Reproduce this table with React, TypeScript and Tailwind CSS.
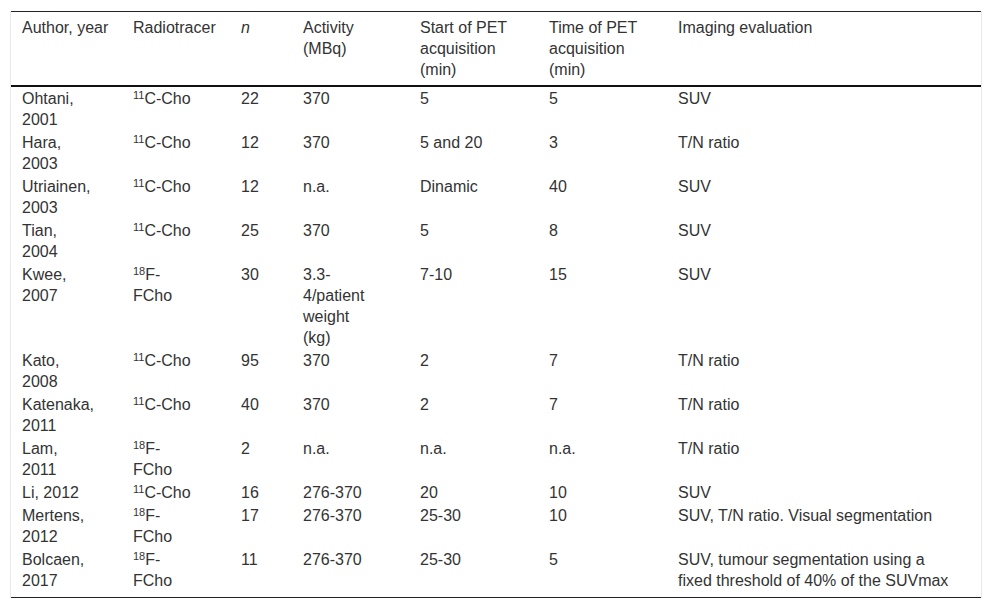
import React from 'react';

type Row = {
  author: string[];
  iso: string;
  tracer: string[];
  n: string;
  activity: string[];
  start: string;
  time: string;
  evaluation: string[];
};

const rows: Row[] = [
  { author: ['Ohtani,', '2001'], iso: '11', tracer: ['C-Cho'], n: '22', activity: ['370'], start: '5', time: '5', evaluation: ['SUV'] },
  { author: ['Hara,', '2003'], iso: '11', tracer: ['C-Cho'], n: '12', activity: ['370'], start: '5 and 20', time: '3', evaluation: ['T/N ratio'] },
  { author: ['Utriainen,', '2003'], iso: '11', tracer: ['C-Cho'], n: '12', activity: ['n.a.'], start: 'Dinamic', time: '40', evaluation: ['SUV'] },
  { author: ['Tian,', '2004'], iso: '11', tracer: ['C-Cho'], n: '25', activity: ['370'], start: '5', time: '8', evaluation: ['SUV'] },
  { author: ['Kwee,', '2007'], iso: '18', tracer: ['F-', 'FCho'], n: '30', activity: ['3.3-', '4/patient', 'weight', '(kg)'], start: '7-10', time: '15', evaluation: ['SUV'] },
  { author: ['Kato,', '2008'], iso: '11', tracer: ['C-Cho'], n: '95', activity: ['370'], start: '2', time: '7', evaluation: ['T/N ratio'] },
  { author: ['Katenaka,', '2011'], iso: '11', tracer: ['C-Cho'], n: '40', activity: ['370'], start: '2', time: '7', evaluation: ['T/N ratio'] },
  { author: ['Lam,', '2011'], iso: '18', tracer: ['F-', 'FCho'], n: '2', activity: ['n.a.'], start: 'n.a.', time: 'n.a.', evaluation: ['T/N ratio'] },
  { author: ['Li, 2012'], iso: '11', tracer: ['C-Cho'], n: '16', activity: ['276-370'], start: '20', time: '10', evaluation: ['SUV'] },
  { author: ['Mertens,', '2012'], iso: '18', tracer: ['F-', 'FCho'], n: '17', activity: ['276-370'], start: '25-30', time: '10', evaluation: ['SUV, T/N ratio. Visual segmentation'] },
  { author: ['Bolcaen,', '2017'], iso: '18', tracer: ['F-', 'FCho'], n: '11', activity: ['276-370'], start: '25-30', time: '5', evaluation: ['SUV, tumour segmentation using a', 'fixed threshold of 40% of the SUVmax'] },
];

function Lines({ lines }: { lines: string[] }) {
  return (
    <>
      {lines.map((l, i) => (
        <div key={i} className="whitespace-nowrap">{l}</div>
      ))}
    </>
  );
}

export default function App() {
  return (
    <div className="min-h-[609px] bg-white pt-[11px] text-[16px] leading-[21px] text-[#333] font-['Liberation_Sans',Arial,sans-serif]">
      <div className="ml-[10px] w-[972px] border-x border-[#e8e8e8]">
        <div className="border-t border-[#222] border-b pb-[5px]">
          <table className="w-full table-fixed border-collapse">
            <colgroup>
              <col className="w-[111px]" />
              <col className="w-[108px]" />
              <col className="w-[62px]" />
              <col className="w-[117px]" />
              <col className="w-[129px]" />
              <col className="w-[129px]" />
              <col />
            </colgroup>
            <thead>
              <tr className="border-b-2 border-[#111] text-left align-top">
                <th className="pl-[11px] pt-[5px] pb-[5px] font-normal whitespace-nowrap">Author, year</th>
                <th className="pl-[11px] pt-[5px] pb-[5px] font-normal">Radiotracer</th>
                <th className="pl-[11px] pt-[5px] pb-[5px] font-normal italic">n</th>
                <th className="pl-[11px] pt-[5px] pb-[5px] font-normal">
                  <Lines lines={['Activity', '(MBq)']} />
                </th>
                <th className="pl-[11px] pt-[5px] pb-[5px] font-normal">
                  <Lines lines={['Start of PET', 'acquisition', '(min)']} />
                </th>
                <th className="pl-[11px] pt-[5px] pb-[5px] font-normal">
                  <Lines lines={['Time of PET', 'acquisition', '(min)']} />
                </th>
                <th className="pl-[11px] pt-[5px] pb-[5px] font-normal">Imaging evaluation</th>
              </tr>
            </thead>
            <tbody>
              {rows.map((r, i) => (
                <tr key={i} className="align-top">
                  <td className="pl-[11px] py-px"><Lines lines={r.author} /></td>
                  <td className="pl-[11px] py-px">
                    <div className="whitespace-nowrap">
                      <sup className="text-[11px]">{r.iso}</sup>
                      {r.tracer[0]}
                    </div>
                    {r.tracer[1] && <div>{r.tracer[1]}</div>}
                  </td>
                  <td className="pl-[11px] py-px">{r.n}</td>
                  <td className="pl-[11px] py-px"><Lines lines={r.activity} /></td>
                  <td className="pl-[11px] py-px whitespace-nowrap">{r.start}</td>
                  <td className="pl-[11px] py-px whitespace-nowrap">{r.time}</td>
                  <td className="pl-[11px] py-px"><Lines lines={r.evaluation} /></td>
                </tr>
              ))}
            </tbody>
          </table>
        </div>
      </div>
    </div>
  );
}
